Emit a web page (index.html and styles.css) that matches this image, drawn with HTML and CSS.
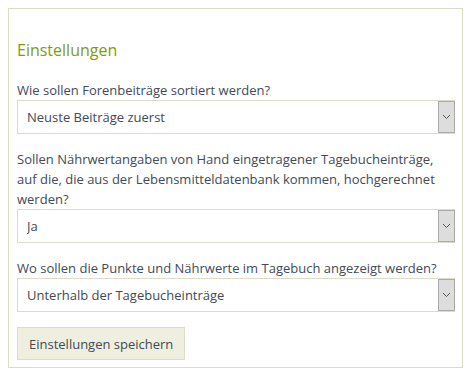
FILE: index.html
```html
<!DOCTYPE html>
<html lang="de">
<head>
<meta charset="utf-8">
<link rel="stylesheet" href="styles.css">
</head>
<body>
<form class="panel">
  <h3 class="title">Einstellungen</h3>
  <div class="group">
    <label class="label">Wie sollen Forenbeiträge sortiert werden?</label>
    <div class="select">
      <select><option>Neuste Beiträge zuerst</option></select>
      <span class="arrow"><svg width="9" height="6" viewBox="0 0 9 6"><path d="M1 1l3.5 3.5L8 1" fill="none" stroke="#555" stroke-width="1"/></svg></span>
    </div>
  </div>
  <div class="group">
    <label class="label">Sollen Nährwertangaben von Hand eingetragener Tagebucheinträge, auf die, die aus der Lebensmitteldatenbank kommen, hochgerechnet werden?</label>
    <div class="select">
      <select><option>Ja</option></select>
      <span class="arrow"><svg width="9" height="6" viewBox="0 0 9 6"><path d="M1 1l3.5 3.5L8 1" fill="none" stroke="#555" stroke-width="1"/></svg></span>
    </div>
  </div>
  <div class="group">
    <label class="label">Wo sollen die Punkte und Nährwerte im Tagebuch angezeigt werden?</label>
    <div class="select">
      <select><option>Unterhalb der Tagebucheinträge</option></select>
      <span class="arrow"><svg width="9" height="6" viewBox="0 0 9 6"><path d="M1 1l3.5 3.5L8 1" fill="none" stroke="#555" stroke-width="1"/></svg></span>
    </div>
  </div>
  <button type="button" class="btn">Einstellungen speichern</button>
</form>
</body>
</html>
```
FILE: styles.css
```css
html, body {
  margin: 0;
  padding: 0;
  background: #fff;
}
body {
  padding: 8px;
  font-family: "Open Sans", "Noto Sans", sans-serif;
  font-size: 13px;
  color: #424a55;
}
.panel {
  width: 455px;
  box-sizing: border-box;
  border: 1px solid #dcdcc8;
  padding: 8px 7px 7px 8px;
}
.title {
  margin: 23px 0 20px;
  font-size: 16px;
  font-weight: 400;
  line-height: 20px;
  color: #7f9c0a;
}
.group {
  margin-bottom: 15px;
}
.label {
  display: block;
  line-height: 20px;
  color: #424a55;
}
.select {
  display: flex;
  height: 34px;
  box-sizing: border-box;
  border: 1px solid #dcdcc8;
  background: #fff;
}
.select select {
  flex: 1;
  appearance: none;
  -webkit-appearance: none;
  border: none;
  background: transparent;
  font: inherit;
  color: #424a55;
  padding: 0 9px;
  outline: none;
}
.arrow {
  width: 15px;
  margin-right: -1px;
  border: 1px solid #aaa;
  background: #ddd;
  display: flex;
  align-items: center;
  justify-content: center;
}
.btn {
  display: block;
  height: 33px;
  padding: 0 11px;
  border: 1px solid #dcdcc8;
  background: #efefe0;
  font: inherit;
  color: #424a55;
}
```
